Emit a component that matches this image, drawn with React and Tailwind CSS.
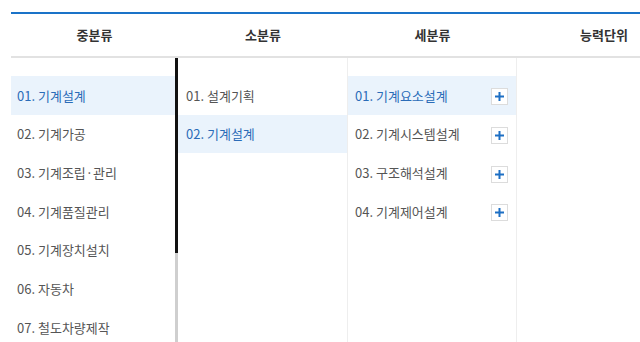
import React from "react";

const col1 = ["01. 기계설계", "02. 기계가공", "03. 기계조립·관리", "04. 기계품질관리", "05. 기계장치설치", "06. 자동차", "07. 철도차량제작"];
const col2 = ["01. 설계기획", "02. 기계설계"];
const col3 = ["01. 기계요소설계", "02. 기계시스템설계", "03. 구조해석설계", "04. 기계제어설계"];

function Plus() {
  return (
    <span className="flex h-[17px] w-[17px] items-center justify-center border border-[#dcdcdc] bg-white">
      <svg width="11" height="11" viewBox="0 0 11 11">
        <path d="M5.5 1v9M1 5.5h9" stroke="#1d6fc4" strokeWidth="2" />
      </svg>
    </span>
  );
}

export default function App() {
  return (
    <div
      className="h-[342px] w-[640px] overflow-hidden bg-white pl-[11px] pt-[12px]"
      style={{ fontFamily: '"Noto Sans CJK KR", "Noto Sans", sans-serif' }}
    >
      <div className="w-[680px]">
        <div className="grid h-[46px] grid-cols-[167px_170px_169px_174px] items-center border-t-2 border-b-2 border-t-[#1a73c8] border-b-[#e2e2e2] text-[13px] font-bold text-[#333]">
          <div className="text-center">중분류</div>
          <div className="text-center">소분류</div>
          <div className="text-center">세분류</div>
          <div className="text-center">능력단위</div>
        </div>
        <div className="grid h-[300px] grid-cols-[167px_170px_169px_174px] text-[13px]">
          <div className="flex">
            <div className="flex-1 pt-[18px]">
              {col1.map((t, i) => (
                <div
                  key={t}
                  className={`flex h-[38.67px] items-center pl-[6px] ${i === 0 ? "bg-[#eaf3fc] text-[#2b6cb8]" : "text-[#555]"}`}
                >
                  {t}
                </div>
              ))}
            </div>
            <div className="flex w-[3px] flex-col">
              <div className="h-[195px] bg-[#111]" />
              <div className="flex-1 bg-[#cfcfcf]" />
            </div>
          </div>
          <div className="border-r border-[#eeeeee] pt-[18px]">
            {col2.map((t, i) => (
              <div
                key={t}
                className={`flex h-[38.67px] items-center pl-[8px] ${i === 1 ? "bg-[#eaf3fc] text-[#2b6cb8]" : "text-[#555]"}`}
              >
                {t}
              </div>
            ))}
          </div>
          <div className="border-r border-[#eeeeee] pt-[18px]">
            {col3.map((t, i) => (
              <div
                key={t}
                className={`flex h-[38.67px] items-center justify-between pl-[7px] pr-[8px] ${i === 0 ? "bg-[#eaf3fc] text-[#2b6cb8]" : "text-[#555]"}`}
              >
                <span>{t}</span>
                <span className="mt-[3px]">
                  <Plus />
                </span>
              </div>
            ))}
          </div>
          <div />
        </div>
      </div>
    </div>
  );
}
